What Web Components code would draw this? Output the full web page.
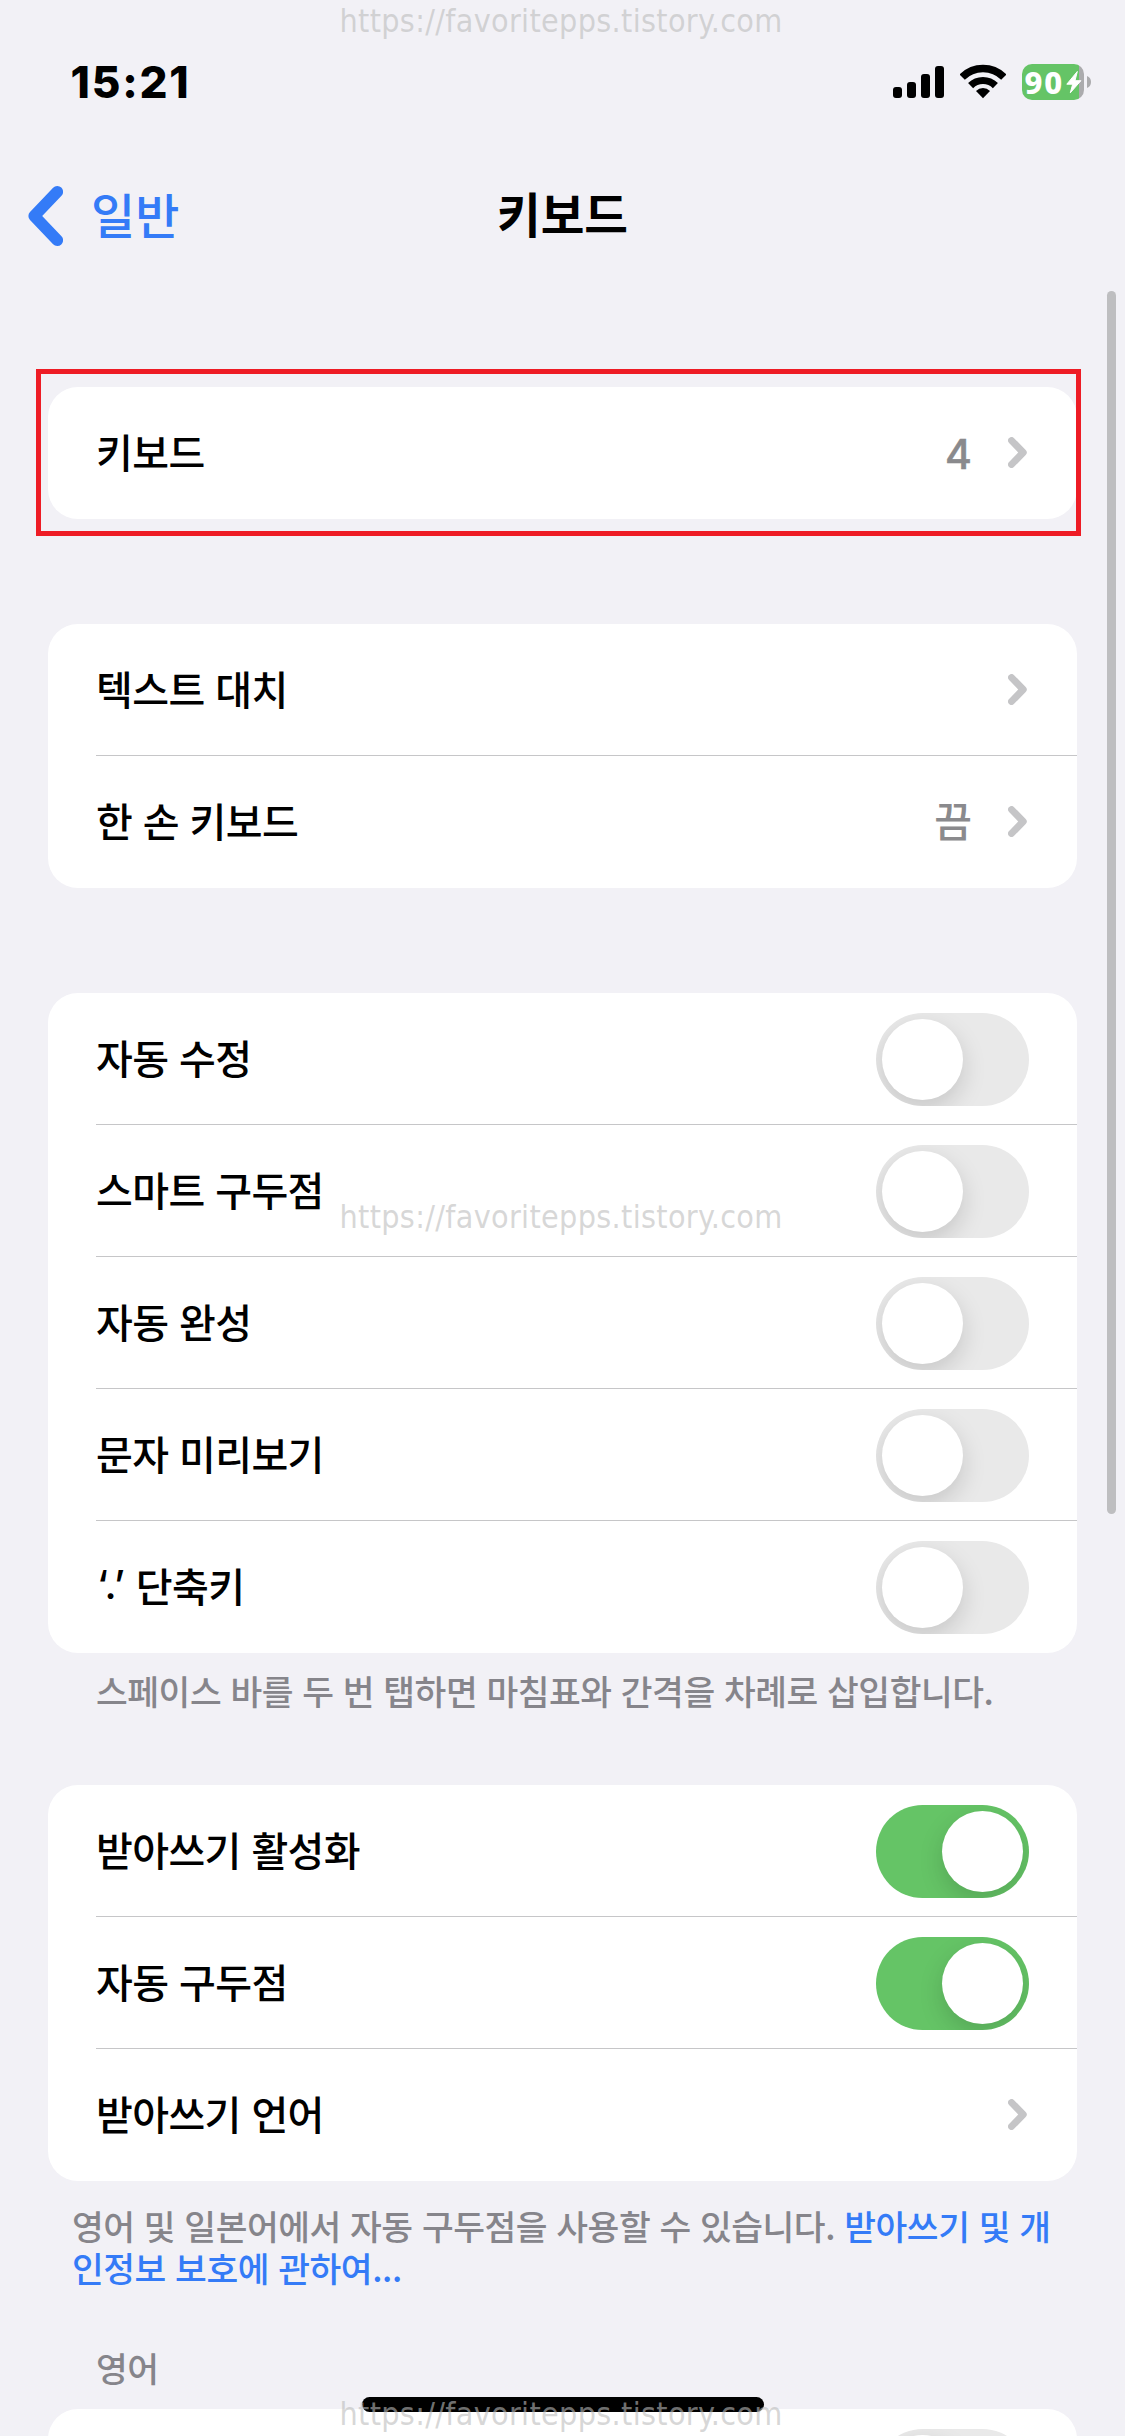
<!DOCTYPE html>
<html lang="ko">
<head>
<meta charset="utf-8">
<title>키보드</title>
<style>
  html, body { margin: 0; background: #f2f1f6; }
  body { width: 1125px; height: 2436px; overflow: hidden; position: relative; font-family: "Noto Sans CJK KR", sans-serif; }
</style>
</head>
<body>
<settings-screen>
  <status-bar time="15:21" level="90"></status-bar>
  <nav-bar back="일반" heading="키보드"></nav-bar>
  <settings-list>
    <settings-group highlighted>
      <settings-row label="키보드" value="4" chevron></settings-row>
    </settings-group>
    <settings-group>
      <settings-row label="텍스트 대치" chevron></settings-row>
      <settings-row label="한 손 키보드" value="끔" chevron></settings-row>
    </settings-group>
    <settings-group>
      <settings-row label="자동 수정"><toggle-switch></toggle-switch></settings-row>
      <settings-row label="스마트 구두점"><toggle-switch></toggle-switch></settings-row>
      <settings-row label="자동 완성"><toggle-switch></toggle-switch></settings-row>
      <settings-row label="문자 미리보기"><toggle-switch></toggle-switch></settings-row>
      <settings-row mark="‘.’" label="단축키"><toggle-switch></toggle-switch></settings-row>
    </settings-group>
    <group-note>스페이스 바를 두 번 탭하면 마침표와 간격을 차례로 삽입합니다.</group-note>
    <settings-group>
      <settings-row label="받아쓰기 활성화"><toggle-switch on></toggle-switch></settings-row>
      <settings-row label="자동 구두점"><toggle-switch on></toggle-switch></settings-row>
      <settings-row label="받아쓰기 언어" chevron></settings-row>
    </settings-group>
    <group-note wide>영어 및 일본어에서 자동 구두점을 사용할 수 있습니다. <note-link>받아쓰기 및 개<br>인정보 보호에 관하여...</note-link></group-note>
    <group-note header>영어</group-note>
    <settings-group>
      <settings-row><toggle-switch></toggle-switch></settings-row>
    </settings-group>
  </settings-list>
  <scroll-thumb></scroll-thumb>
  <home-indicator></home-indicator>
  <water-mark style="top:2px"></water-mark>
  <water-mark style="top:1198px"></water-mark>
  <water-mark style="top:2395px"></water-mark>
</settings-screen>
<script>
const define = (name, render) => customElements.define(name, class extends HTMLElement {
  constructor() { super(); this.attachShadow({ mode: 'open' }); }
  connectedCallback() { this.shadowRoot.innerHTML = render(this); }
});
const attr = (el, n) => el.getAttribute(n) || '';

define('settings-screen', () => `
  <style>:host{display:flex;flex-direction:column;position:relative;width:1125px;height:2436px;overflow:hidden;background:#f2f1f6}</style>
  <slot></slot>`);

define('status-bar', el => `
  <style>
    :host{display:flex;flex:none;height:164px;box-sizing:border-box;padding:0 34px 0 70.5px;align-items:center;justify-content:space-between;font-family:Inter,sans-serif}
    .time{font-size:44px;font-weight:800;letter-spacing:1.8px;line-height:50px}
    .icons{display:flex;align-items:center;height:36px}
    .wifi{margin:0 16px}
    .battery{display:flex;align-items:center;gap:3px}
    .cell{position:relative;width:62px;height:36px;border-radius:10px;background:linear-gradient(90deg,#65c466 56.5px,#ababad 56.5px);color:#fff;font-family:"Noto Sans",sans-serif;font-size:31px;font-weight:800;line-height:36px;text-indent:2.5px;letter-spacing:1.8px}
    .cell svg{position:absolute;inset:0}
    svg{display:block}
  </style>
  <span class="time">${attr(el, 'time')}</span>
  <div class="icons">
    <svg width="51" height="36" viewBox="0 0 51 36"><rect x="0" y="23" width="9" height="11" rx="3"/><rect x="14" y="18" width="9" height="16" rx="3"/><rect x="28" y="10" width="9" height="24" rx="3"/><rect x="42" y="2" width="9" height="32" rx="3"/></svg>
    <svg class="wifi" width="46" height="36" viewBox="0 0 46 36"><g fill="none" stroke="#000"><path stroke-width="7.6" d="M2.14 13.14A29.5 29.5 0 0 1 43.86 13.14"/><path stroke-width="7.2" d="M10.6 21.6A17.6 17.6 0 0 1 35.4 21.6"/></g><path d="M23 34.2L16 26.9A10 10 0 0 1 30 26.9Z"/></svg>
    <div class="battery">
      <div class="cell">${attr(el, 'level')}<svg width="62" height="36" viewBox="0 0 62 36"><path fill="#fff" stroke="#fff" stroke-width="1" stroke-linejoin="round" d="M55.3 7.5L44.8 20.2H50.7L48.3 28.8L58.9 16.7H53Z"/></svg></div>
      <svg width="4" height="12" viewBox="0 0 4 12"><path fill="#ababad" d="M0 0Q4 1.5 4 6T0 12Z"/></svg>
    </div>
  </div>`);

define('nav-bar', el => `
  <style>
    :host{display:grid;grid-template-columns:1fr auto 1fr;align-items:center;height:104px;flex:none}
    .back{display:flex;align-items:center;gap:28px;padding-left:27px;color:#347bf7;font-size:48px;font-weight:500}
    .label,h1{line-height:60px;margin:-6px 0 0}
    h1{font-size:47.5px;font-weight:700}
    svg{display:block}
  </style>
  <div class="back"><svg width="36" height="60" viewBox="0 0 36 60"><path d="M30.3 5.8L7.2 30L30.3 54.2" fill="none" stroke="#347bf7" stroke-width="11.6" stroke-linecap="round" stroke-linejoin="round"/></svg><span class="label">${attr(el, 'back')}</span></div>
  <h1>${attr(el, 'heading')}</h1>`);

define('settings-list', () => `
  <style>
    :host{display:flex;flex-direction:column;padding:119px 48px 0}
    ::slotted(settings-group){margin-bottom:105px}
  </style>
  <slot></slot>`);

define('settings-group', el => `
  <style>
    :host{display:block;position:relative;flex:none}
    .card{background:#fff;border-radius:30px;overflow:hidden}
    .frame{position:absolute;inset:-18px -4px -17px -12px;border:5px solid #ee1c25}
    ::slotted(settings-row:last-child){--line:transparent}
  </style>
  <div class="card"><slot></slot></div>${el.hasAttribute('highlighted') ? '<div class="frame"></div>' : ''}`);

define('settings-row', el => `
  <style>
    :host{display:block;padding-left:48px}
    .row{display:flex;align-items:center;height:132px;box-sizing:border-box;padding-right:48px;border-bottom:1px solid var(--line,#c6c6c8)}
    .label{flex:1;display:flex;gap:11px;font-size:40px;font-weight:500;letter-spacing:-.6px;line-height:60px;margin-top:-3px;color:#000;white-space:pre}
    .mark{font-family:Inter,sans-serif;letter-spacing:0;margin-left:1px}
    .value{font:500 41px/60px Inter,"Noto Sans CJK KR",sans-serif;color:#8a8a8d;margin-right:36px}
    .value.number{margin-top:2px;-webkit-text-stroke:.5px currentColor}
    svg{display:block;margin-right:2px}
    ::slotted(toggle-switch){margin-top:2px}
  </style>
  <div class="row">
    <span class="label">${attr(el, 'mark') ? `<span class="mark">${attr(el, 'mark')}</span>` : ''}<span>${attr(el, 'label')}</span></span>
    ${attr(el, 'value') ? `<span class="value ${/^\d+$/.test(attr(el, 'value')) ? 'number' : ''}">${attr(el, 'value')}</span>` : ''}
    ${el.hasAttribute('chevron') ? '<svg width="19" height="31" viewBox="0 0 19 31"><path d="M3.6 3.6L15.2 15.5L3.6 27.4" fill="none" stroke="#c5c5c7" stroke-width="7" stroke-linecap="round" stroke-linejoin="round"/></svg>' : ''}
    <slot></slot>
  </div>`);

define('toggle-switch', () => `
  <style>
    :host{display:flex;box-sizing:border-box;width:153px;height:93px;padding:6px;border-radius:47px;background:#e9e9e9;overflow:hidden}
    :host([on]){background:#65c466;justify-content:flex-end}
    .knob{width:81px;height:81px;border-radius:50%;background:#fff;box-shadow:0 9px 24px rgba(0,0,0,.15)}
  </style>
  <div class="knob"></div>`);

define('group-note', () => `
  <style>
    :host{display:block;box-sizing:border-box;flex:none;margin-top:-105px;padding:16px 0 0 48px;height:132px;font-size:34.5px;font-weight:500;letter-spacing:-.44px;line-height:42px;color:#86858b;white-space:nowrap}
    :host([wide]){padding:23px 0 0 24px;height:165px}
    :host([header]){margin-top:0;padding-top:0;height:63px}
  </style>
  <slot></slot>`);

define('note-link', () => `
  <style>:host{display:inline;color:#347bf7}</style><slot></slot>`);

define('scroll-thumb', () => `
  <style>:host{display:block;position:absolute;left:1107px;top:291px;width:9px;height:1223px;border-radius:4.5px;background:#bebec0}</style>`);

define('home-indicator', () => `
  <style>:host{display:block;position:absolute;left:362px;top:2397px;width:402px;height:15px;border-radius:7.5px;background:#000}</style>`);

define('water-mark', () => `
  <style>:host{display:block;position:absolute;left:339.5px;font:32px/38px "DejaVu Sans Condensed","DejaVu Sans",sans-serif;letter-spacing:.32px;color:rgba(188,188,188,.6);white-space:nowrap}</style>https://favoritepps.tistory.com`);
</script>
</body>
</html>
